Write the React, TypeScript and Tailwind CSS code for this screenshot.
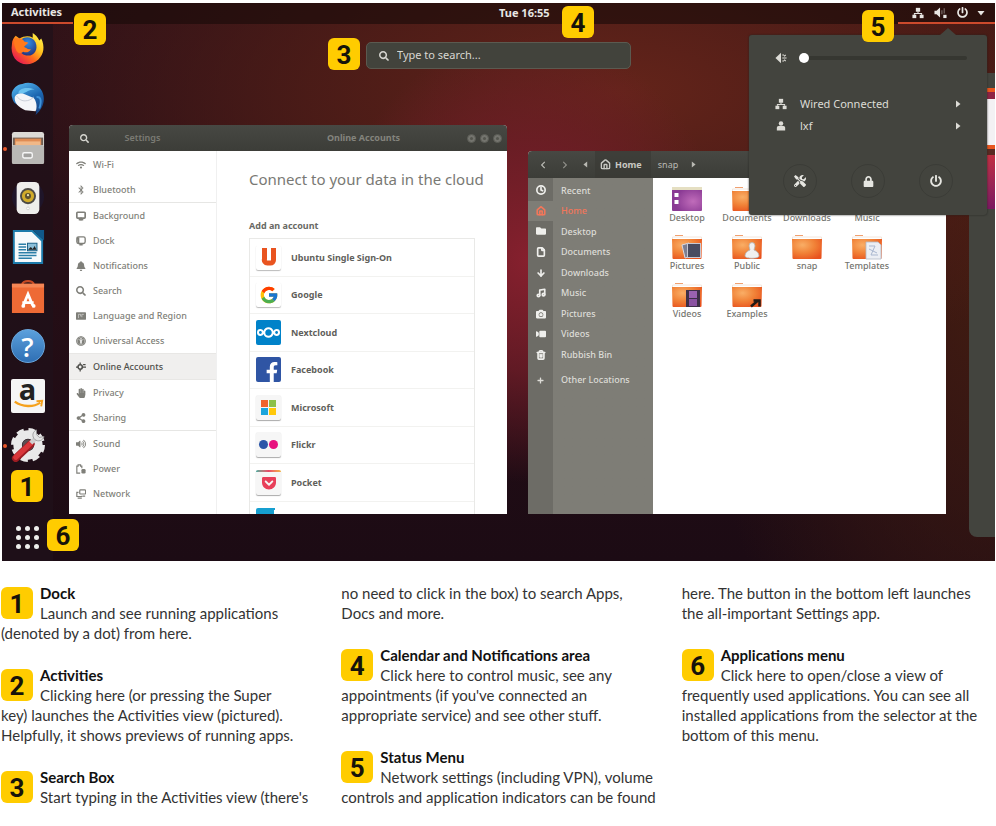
import type { ReactNode } from "react";
import { FcGoogle } from "react-icons/fc";
import { SiNextcloud } from "react-icons/si";
import {
  FaBell,
  FaBluetoothB,
  FaCamera,
  FaChevronLeft,
  FaChevronRight,
  FaFacebookF,
  FaFolder,
  FaHandPaper,
  FaLock,
  FaPlus,
  FaPowerOff,
  FaSearch,
  FaShareAlt,
  FaTools,
  FaUniversalAccess,
  FaVideo,
  FaVolumeUp,
  FaWifi,
} from "react-icons/fa";
import { FaGetPocket } from "react-icons/fa6";
import { ArrowDown, Clock, File, House, Monitor, Music, Trash2 } from "lucide-react";

const uiFont = "font-['Noto_Sans','Open_Sans',sans-serif]";

function Badge({ n, className = "" }: { n: number; className?: string }) {
  return (
    <span
      className={`flex h-8 w-8 items-center justify-center rounded-md bg-[#ffcc00] pt-0.5 font-['Roboto',sans-serif] text-[26px] leading-none font-bold text-[#16130a] ${className}`}
    >
      {n}
    </span>
  );
}

function NetworkIcon({ className = "" }: { className?: string }) {
  return (
    <svg viewBox="0 0 14 14" className={className} fill="currentColor" aria-hidden="true">
      <rect x="4.5" y="1" width="5" height="4.5" />
      <rect x="0.5" y="9" width="4.5" height="4" />
      <rect x="9" y="9" width="4.5" height="4" />
      <path d="M7 5v2.7M2.8 9V7.7h8.4V9" fill="none" stroke="currentColor" strokeWidth="1.2" />
    </svg>
  );
}

function QuietSpeaker({ className = "" }: { className?: string }) {
  return (
    <svg viewBox="0 0 14 14" className={className} fill="currentColor" aria-hidden="true">
      <path d="M0.5 7L7 1v12z" />
      <path d="M8.500 3.500h2M8.500 7h5M8.500 10.500h2M10.500 5l2-1.500M10.500 9l2 1.500" stroke="currentColor" strokeWidth="1.300" />
    </svg>
  );
}

function BlockedSpeaker({ className = "" }: { className?: string }) {
  return (
    <svg viewBox="0 0 14 14" className={className} fill="currentColor" aria-hidden="true">
      <path d="M0.500 5v4h2.200L6.500 12.500v-11L2.700 5z" />
      <path d="M8.500 4.500v4.500M11 2.500v5.500" stroke="currentColor" strokeWidth="1.300" opacity="0.4" />
      <rect x="10" y="9.500" width="3.500" height="3.500" />
    </svg>
  );
}

function PersonIcon({ className = "" }: { className?: string }) {
  return (
    <svg viewBox="0 0 12 12" className={className} fill="currentColor" aria-hidden="true">
      <circle cx="6" cy="3" r="2.700" />
      <path d="M1 11.500V8a2 2 0 0 1 2-2h6a2 2 0 0 1 2 2v3.500z" />
    </svg>
  );
}

function Triangle({ className = "" }: { className?: string }) {
  return (
    <svg viewBox="0 0 6 8" className={className} fill="currentColor" aria-hidden="true">
      <path d="M1 0.5L5.5 4L1 7.5z" />
    </svg>
  );
}

/* ---------- Dock ---------- */

const dockIcons: { name: string; running?: boolean; art: ReactNode }[] = [
  {
    name: "Firefox",
    art: (
      <svg viewBox="0 0 36 36">
        <defs>
          <linearGradient id="ff" x1="0.9" y1="0.1" x2="0.2" y2="0.9">
            <stop offset="0" stopColor="#fff04a" />
            <stop offset="0.35" stopColor="#ffc21e" />
            <stop offset="0.65" stopColor="#ff6a1c" />
            <stop offset="1" stopColor="#e8204e" />
          </linearGradient>
          <radialGradient id="ffb" cx="0.5" cy="0.3" r="0.7">
            <stop offset="0" stopColor="#2f8de4" />
            <stop offset="1" stopColor="#24357f" />
          </radialGradient>
        </defs>
        <path d="M1 13C1 9 3 6 5 4l4 3c5-3 10-3 14-1V1c3 2 5 4 7 8l2-2c4 8 3 17-3 22-7 7-19 7-25-1C1 24 0 18 1 13z" fill="url(#ff)" />
        <path d="M11 8c4-4 12-3 15 3 3 7-1 14-8 14-5 0-9-3-9-8 0-3 1-6 2-9z" fill="url(#ffb)" />
        <path d="M4 7c4-1 9 0 10 3l4 1c0 2-4 3-4 5 3 1 3 3 7 2-1 4-6 4-8 3-3 3-7 1-8-3-2-4-2-8-1-11z" fill="#ff7a1c" />
      </svg>
    ),
  },
  {
    name: "Thunderbird",
    art: (
      <svg viewBox="0 0 36 36">
        <defs>
          <linearGradient id="tb" x1="0.3" y1="0" x2="0.8" y2="1">
            <stop offset="0" stopColor="#4fb0ea" />
            <stop offset="0.5" stopColor="#1c66b0" />
            <stop offset="1" stopColor="#17407f" />
          </linearGradient>
        </defs>
        <path d="M1 16C-1 8 7 2 12 2c8-3 17 0 21 8 4 9 1 18-7 25 1-3 1-5 0-7-5-4-14-5-19-4-4-1-5-4-6-8z" fill="url(#tb)" />
        <path d="M4 16c2-4 5-4 8-4l12 5c3 3 4 10 2 14l-11-1C8 27 3 22 4 16z" fill="#f4f5f8" />
        <path d="M6 15c3 4 6 5 9 5 4 0 7-2 9-4" fill="none" stroke="#c7ccd6" />
        <path d="M8 12c-1-4 7-8 17-4-7 0-8 3-12 4z" fill="#6cc3f0" />
        <path d="M27 16c4-1 6 3 3 12" fill="none" stroke="#3e93da" strokeWidth="2" />
      </svg>
    ),
  },
  {
    name: "Files",
    running: true,
    art: (
      <svg viewBox="0 0 36 36">
        <rect x="1" y="1" width="34" height="34" rx="2.5" fill="#dcdad6" />
        <rect x="2" y="7" width="32" height="8" fill="#6d5f55" />
        <rect x="4" y="8" width="28" height="7" fill="#e08c54" />
        <rect x="5" y="11" width="26" height="4" fill="#f0b888" />
        <rect x="1" y="15" width="34" height="20" rx="2" fill="#b9b8b5" />
        <rect x="12.500" y="23" width="10" height="5.500" rx="1.500" fill="#a1a09e" stroke="#f7f7f7" strokeWidth="1.500" />
      </svg>
    ),
  },
  {
    name: "Rhythmbox",
    art: (
      <svg viewBox="0 0 36 36">
        <circle cx="18" cy="17" r="17" fill="#1c1a3a" opacity="0.5" />
        <rect x="6" y="1" width="24" height="34" rx="5" fill="#eeeeec" />
        <circle cx="18" cy="16" r="8.500" fill="#4c4a46" />
        <circle cx="18" cy="16" r="6.500" fill="#d0ab2a" />
        <circle cx="18" cy="16" r="3.200" fill="#5c5130" />
        <circle cx="18" cy="15" r="1.200" fill="#efe7b0" />
        <circle cx="18" cy="29" r="1.500" fill="#fff" stroke="#d0d0d0" />
      </svg>
    ),
  },
  {
    name: "LibreOffice Writer",
    art: (
      <svg viewBox="0 0 36 36">
        <path d="M2 0h21l11 10v26H2z" fill="#1c7bab" />
        <path d="M4 2h18l10 10v22H4z" fill="#f6fafc" />
        <path d="M23 0h12v11z" fill="#10598a" />
        <path d="M8 15h8M8 18h8M8 21h8M8 24h19M8 27h19M8 30h14" stroke="#2b7fa8" strokeWidth="1.600" />
        <rect x="17.500" y="14" width="10" height="8" fill="#8bbfd9" stroke="#165d83" />
        <path d="M18 21l3-3 2 2 2-3 2 4z" fill="#222" />
      </svg>
    ),
  },
  {
    name: "Ubuntu Software",
    art: (
      <svg viewBox="0 0 36 36">
        <path d="M12 5c0-5 12-5 12 0" fill="none" stroke="#c64a24" strokeWidth="2.500" />
        <path d="M1 4h34v31H1z" fill="#ee6a35" />
        <path d="M1 4h34v4H1z" fill="#f58655" />
        <path d="M13 27l5-12 5 12M12 24h12" fill="none" stroke="#fff" strokeWidth="3" />
        <circle cx="13" cy="27.500" r="2" fill="#fff" />
        <circle cx="24" cy="27.500" r="2" fill="#fff" />
      </svg>
    ),
  },
  {
    name: "Help",
    art: (
      <span className="flex h-full w-full items-center justify-center rounded-full border border-[#6aa6dc] bg-linear-to-b from-[#5ba0dc] to-[#2f6fb4] font-['Open_Sans',sans-serif] text-[27px] leading-none font-semibold text-white">
        ?
      </span>
    ),
  },
  {
    name: "Amazon",
    art: (
      <span className="relative flex h-full w-full justify-center rounded-xs bg-[#f5f5f5] font-['Open_Sans',sans-serif] text-[29px] leading-5 font-bold text-[#222]">
        a
        <svg viewBox="0 0 36 36" className="absolute inset-0" fill="none">
          <path d="M4 24c8 6 20 6 27 1" stroke="#f5a11c" strokeWidth="2.500" />
          <path d="M27 23.500l6-0.500-1 6" stroke="#f5a11c" strokeWidth="2" />
        </svg>
      </span>
    ),
  },
  {
    name: "Settings",
    running: true,
    art: (
      <svg viewBox="0 0 36 36">
        <circle cx="18" cy="18" r="11" fill="none" stroke="#e9e9e9" strokeWidth="9" />
        <circle cx="18" cy="18" r="16" fill="none" stroke="#e9e9e9" strokeWidth="4" strokeDasharray="7.570 5" />
        <circle cx="18" cy="18" r="6" fill="#5a5053" />
        <path d="M5 32L21 17" stroke="#9c1c22" strokeWidth="8" strokeLinecap="round" />
        <path d="M5 31L21 16" stroke="#d8363a" strokeWidth="5.500" strokeLinecap="round" />
        <path d="M21 16l6-6" stroke="#cfcfcf" strokeWidth="4.500" />
        <path d="M27 2a6 6 0 1 0 8 7l-5 1-3-3z" fill="#e4e4e4" stroke="#8d8d8d" strokeWidth="0.800" />
      </svg>
    ),
  },
];

function Dock() {
  return (
    <nav aria-label="Dock" className="flex w-[51px] shrink-0 flex-col items-center bg-[#1f1119]/70 pt-2">
      <div className="flex h-[430px] flex-col justify-between">
        {dockIcons.map((d) => (
          <button key={d.name} aria-label={d.name} className="relative block h-[34px] w-[34px]">
            {d.running && <span className="absolute top-4 -left-2 h-1 w-1 rounded-full bg-[#e8562a]" />}
            {d.art}
          </button>
        ))}
      </div>
      <button aria-label="Show applications" className="mt-16 grid grid-cols-3 gap-1">
        {Array.from({ length: 9 }, (_, i) => (
          <span key={i} className="h-[5px] w-[5px] rounded-full bg-[#eeeeec]" />
        ))}
      </button>
    </nav>
  );
}

/* ---------- Settings window ---------- */

const i10 = "h-[10px] w-[10px]";

function DockPanelIcon() {
  return (
    <svg viewBox="0 0 12 12" className={i10} aria-hidden="true">
      <rect x="1" y="1" width="10" height="8" rx="2" fill="none" stroke="currentColor" strokeWidth="1.600" />
      <path d="M1 1.500h3V9H2zM4 9h4v2.500H4z" fill="currentColor" />
    </svg>
  );
}

function FlagIcon() {
  return (
    <svg viewBox="0 0 12 12" className={i10} aria-hidden="true">
      <rect y="1.500" width="12" height="9" rx="1" fill="currentColor" />
      <path d="M3 8.500V4h2.500v2.500M7 7.500V4h2.500" fill="none" stroke="#fff" strokeWidth="0.800" opacity="0.7" />
    </svg>
  );
}

function CloudPlugIcon() {
  return (
    <svg viewBox="0 0 12 12" className={i10} aria-hidden="true">
      <circle cx="5" cy="6" r="2.600" fill="none" stroke="currentColor" strokeWidth="1.800" />
      <path d="M5 0.500v2.500M5 9v2.500M0 6h2.500M7.500 6H12M8.500 3h3" stroke="currentColor" strokeWidth="1.500" />
    </svg>
  );
}

function PowerPanelIcon() {
  return (
    <svg viewBox="0 0 12 12" className={i10} aria-hidden="true">
      <path d="M5 11H1V2.500h1.500V1h3v1.500H7V5" fill="none" stroke="currentColor" strokeWidth="1.400" />
      <rect x="6.500" y="6" width="5" height="5.500" rx="1.500" fill="currentColor" />
    </svg>
  );
}

function NetworkPanelIcon() {
  return (
    <svg viewBox="0 0 12 12" className={i10} aria-hidden="true">
      <rect x="4.500" y="1" width="7" height="5" rx="1" fill="none" stroke="currentColor" strokeWidth="1.400" />
      <path d="M3 4H1v5h6V8M2 11h5M8 8.500h3" fill="none" stroke="currentColor" strokeWidth="1.400" />
    </svg>
  );
}

const panels: { label: string; icon: ReactNode; ends?: boolean; active?: boolean }[] = [
  { label: "Wi-Fi", icon: <FaWifi className={i10} /> },
  { label: "Bluetooth", icon: <FaBluetoothB className={i10} />, ends: true },
  { label: "Background", icon: <Monitor className={i10} strokeWidth={4} /> },
  { label: "Dock", icon: <DockPanelIcon /> },
  { label: "Notifications", icon: <FaBell className={i10} /> },
  { label: "Search", icon: <FaSearch className={i10} /> },
  { label: "Language and Region", icon: <FlagIcon /> },
  { label: "Universal Access", icon: <FaUniversalAccess className={i10} /> },
  { label: "Online Accounts", icon: <CloudPlugIcon />, active: true },
  { label: "Privacy", icon: <FaHandPaper className={i10} /> },
  { label: "Sharing", icon: <FaShareAlt className={i10} />, ends: true },
  { label: "Sound", icon: <FaVolumeUp className={i10} /> },
  { label: "Power", icon: <PowerPanelIcon /> },
  { label: "Network", icon: <NetworkPanelIcon /> },
];

const tile = "flex h-[25px] w-[25px] items-center justify-center overflow-hidden rounded-xs";
const paleTile = `${tile} bg-[#f6f6f6] shadow-[0_1px_1px_#aaa]`;

const accounts: { name: string; icon: ReactNode }[] = [
  {
    name: "Ubuntu Single Sign-On",
    icon: (
      <span className={`${tile} bg-white shadow-[0_1px_1px_#bbb]`}>
        <svg viewBox="0 0 16 18" className="h-[18px] w-4" aria-hidden="true">
          <path d="M3.500 0v11a3 3 0 0 0 3 4h3a3 3 0 0 0 3-3V0" fill="none" stroke="#e95420" strokeWidth="5" />
        </svg>
      </span>
    ),
  },
  {
    name: "Google",
    icon: (
      <span className={`${tile} bg-white shadow-[0_1px_1px_#bbb]`}>
        <FcGoogle className="h-5 w-5" />
      </span>
    ),
  },
  {
    name: "Nextcloud",
    icon: (
      <span className={`${tile} bg-[#0082c9] text-white`}>
        <SiNextcloud className="h-[23px] w-[23px]" />
      </span>
    ),
  },
  {
    name: "Facebook",
    icon: (
      <span className={`${tile} bg-[#2f55a4] pt-1 pl-1.5 text-white`}>
        <FaFacebookF className="h-5 w-4" />
      </span>
    ),
  },
  {
    name: "Microsoft",
    icon: (
      <span className={paleTile}>
        <span className="grid grid-cols-2 gap-px">
          <span className="h-[7px] w-[7px] bg-[#f0642c]" />
          <span className="h-[7px] w-[7px] bg-[#8bc04a]" />
          <span className="h-[7px] w-[7px] bg-[#1ba5dc]" />
          <span className="h-[7px] w-[7px] bg-[#ffc80a]" />
        </span>
      </span>
    ),
  },
  {
    name: "Flickr",
    icon: (
      <span className={`${paleTile} gap-px`}>
        <span className="h-[9px] w-[9px] rounded-full bg-[#2c57a8]" />
        <span className="h-[9px] w-[9px] rounded-full bg-[#e8107e]" />
      </span>
    ),
  },
  {
    name: "Pocket",
    icon: (
      <span className={`${paleTile} flex-col`}>
        <span className="h-0.5 w-full bg-linear-to-r from-[#38a89d] via-[#e8476a] to-[#f2b33d]" />
        <span className="flex flex-1 items-center text-[#e8405a]">
          <FaGetPocket className="h-4 w-4" />
        </span>
      </span>
    ),
  },
];

function SettingsWindow() {
  return (
    <section
      aria-label="Settings window"
      className="absolute top-[122px] left-[67px] flex h-[389px] w-[438px] flex-col overflow-hidden rounded-t-[4px] bg-white"
    >
      <header className="flex h-[26px] shrink-0 items-center bg-linear-to-b from-[#474843] to-[#3c3d38] text-[9px] font-bold text-[#84847d]">
        <div className="flex w-[147px] items-center pl-[11px]">
          <FaSearch className="h-[9px] w-[9px] text-[#d5d5cf]" />
          <h2 className="flex-1 pr-5 text-center font-semibold text-[#7b7b74]">Settings</h2>
        </div>
        <h3 className="flex-1 pl-11 text-center">Online Accounts</h3>
        <div className="flex gap-1 pr-[5px]">
          {["Minimise", "Maximise", "Close"].map((b) => (
            <button key={b} aria-label={b} className="h-[9px] w-[9px] rounded-full border border-[#5b5c56] bg-[#74746e] p-0.5">
              <span className="block h-full w-full rounded-full bg-[#55564f]" />
            </button>
          ))}
        </div>
      </header>
      <div className="flex min-h-0 flex-1">
        <ul className="w-[148px] shrink-0 border-r border-[#f0f0f0] pt-px text-[9px] text-[#7f7f79]">
          {panels.map((p) => (
            <li
              key={p.label}
              className={
                p.active
                  ? "border-y border-[#e8e7e5] bg-[#f0efee] text-[#4e4e4a]"
                  : p.ends
                    ? "border-b border-[#e6e6e4]"
                    : ""
              }
            >
              <button className="flex h-[25px] w-full items-center gap-[7px] pl-[7px] text-left">
                {p.icon}
                <span className="font-medium whitespace-nowrap">{p.label}</span>
              </button>
            </li>
          ))}
        </ul>
        <div className="flex-1 overflow-hidden px-8 pt-4">
          <h1 className="text-[15px] leading-6 whitespace-nowrap text-[#797974]">Connect to your data in the cloud</h1>
          <h2 className="mt-[27px] text-[9px] leading-4 font-bold text-[#696964]">Add an account</h2>
          <ul className="mt-1 grid h-[302px] grid-rows-8 border border-[#e9e9e7] text-[9px] font-bold text-[#5f5f5b]">
            {accounts.map((a) => (
              <li key={a.name} className="border-b border-[#f2f2f0]">
                <button className="flex h-full w-full items-center gap-[10px] pl-1.5 text-left">
                  {a.icon}
                  {a.name}
                </button>
              </li>
            ))}
            <li className="pt-1.5 pl-1.5">
              <button aria-label="Foursquare" className={`${tile} bg-linear-105 from-[#169fd0] from-60% to-white to-60%`} />
            </li>
          </ul>
        </div>
      </div>
    </section>
  );
}

/* ---------- Files window ---------- */

const places: { label: string; icon: ReactNode; active?: boolean }[] = [
  { label: "Recent", icon: <Clock className={i10} strokeWidth={4} /> },
  { label: "Home", icon: <House className={i10} strokeWidth={4} />, active: true },
  { label: "Desktop", icon: <FaFolder className={i10} /> },
  { label: "Documents", icon: <File className={i10} strokeWidth={4} /> },
  { label: "Downloads", icon: <ArrowDown className={i10} strokeWidth={4} /> },
  { label: "Music", icon: <Music className={i10} strokeWidth={4} /> },
  { label: "Pictures", icon: <FaCamera className={i10} /> },
  { label: "Videos", icon: <FaVideo className={`${i10} -scale-x-100`} /> },
  { label: "Rubbish Bin", icon: <Trash2 className={i10} strokeWidth={4} /> },
];

const emblems: Record<string, ReactNode> = {
  Pictures: (
    <g>
      <path d="M10 11l7-2 3 13-7 2z" fill="#7d7f92" stroke="#d9d9e2" />
      <rect x="15.500" y="9.500" width="13" height="14" fill="#494b60" stroke="#c7c8d3" />
    </g>
  ),
  Public: (
    <path d="M17 12a3 3.500 0 1 1 6 0l-1 4c3 1 5 3 5 6 0 3-14 3-14 0 0-3 2-5 5-6z" fill="#f0f0f0" stroke="#b4b4b4" strokeWidth="0.800" />
  ),
  Templates: (
    <g>
      <path d="M14 8h12l3 3v14H14z" fill="#eceff4" stroke="#b3bac6" strokeWidth="0.800" />
      <path d="M17 12h6l-4 9h7M17 15l8 4" fill="none" stroke="#a9b7cf" />
    </g>
  ),
  Videos: (
    <g>
      <rect x="14" y="8" width="14" height="17" fill="#3d3048" />
      <rect x="17" y="9" width="8" height="7" fill="#9a62b0" />
      <rect x="17" y="17" width="8" height="7" fill="#8a52a2" />
    </g>
  ),
  Examples: (
    <path d="M19 24.500l7-6M21.500 18.500h6v6" fill="none" stroke="#221a16" strokeWidth="2.500" />
  ),
};

function FolderArt({ name }: { name: string }) {
  if (name === "Desktop") {
    return (
      <svg viewBox="0 0 30 26" className="h-[26px] w-[30px]" aria-hidden="true">
        <defs>
          <radialGradient id="desk" cx="0.7" cy="0.6" r="0.6">
            <stop offset="0" stopColor="#c06cba" />
            <stop offset="1" stopColor="#8a3a94" />
          </radialGradient>
        </defs>
        <rect y="1" width="30" height="24" rx="1" fill="url(#desk)" />
        <rect y="1" width="30" height="3" fill="#e5dfc2" />
        <rect x="2.500" y="7" width="4" height="4" fill="#fff" />
        <rect x="2.500" y="14" width="4" height="4" fill="#fff" />
      </svg>
    );
  }
  return (
    <svg viewBox="0 0 30 26" className="h-[26px] w-[30px]" aria-hidden="true">
      <defs>
        <radialGradient id={`folder-${name}`} cx="0.35" cy="0.3" r="0.8">
          <stop offset="0" stopColor="#f9ae66" />
          <stop offset="0.5" stopColor="#f18338" />
          <stop offset="1" stopColor="#e8521e" />
        </radialGradient>
      </defs>
      <path d="M3 1.500h8" stroke="#f0a070" />
      <path d="M0.500 5V3h29v2" fill="none" stroke="#f3e6dc" />
      <path d="M0 5h30l-0.500 19a1 1 0 0 1-1 1H1.500a1 1 0 0 1-1-1z" fill={`url(#folder-${name})`} />
      {emblems[name]}
    </svg>
  );
}

const folders = ["Desktop", "Documents", "Downloads", "Music", "Pictures", "Public", "snap", "Templates", "Videos", "Examples"];

function FilesWindow() {
  return (
    <section
      aria-label="Files window"
      className="absolute top-[148px] left-[526px] flex h-[363px] w-[418px] flex-col overflow-hidden rounded-t-[4px] bg-white"
    >
      <header className="flex h-[27px] shrink-0 items-center bg-linear-to-b from-[#474843] to-[#3c3d38] text-[9px] text-[#b9b9b3]">
        <button aria-label="Back" className="flex w-[26px] justify-center pl-1">
          <FaChevronLeft className="h-2 w-2" />
        </button>
        <button aria-label="Forward" className="flex w-[22px] justify-center">
          <FaChevronRight className="h-2 w-2 text-[#8e8e88]" />
        </button>
        <span className="flex w-[19px] justify-center">
          <Triangle className="h-[7px] w-[5px] rotate-180" />
        </span>
        <button className="flex h-full w-[56px] items-center gap-1 bg-[#383934]/60 pl-[5px] font-bold text-[#c9c9c3]">
          <House className="h-[11px] w-[11px]" strokeWidth={3} />
          Home
        </button>
        <button className="w-[34px] text-center">snap</button>
        <Triangle className="ml-1.5 h-[7px] w-[5px]" />
      </header>
      <div className="flex min-h-0 flex-1">
        <div className="w-[125px] bg-linear-to-r from-[#6d6c66] from-20% to-[#7e7d76] to-20% pt-[2px] text-[9px] font-medium text-[#dddcd7]">
          <ul className="flex h-[185px] flex-col">
            {places.map((p) => (
              <li key={p.label} className={`flex-1 ${p.active ? "text-[#f2765a]" : ""}`}>
                <button className="flex h-full w-full items-center text-left">
                  <span className={`flex h-full w-[25px] items-center justify-center ${p.active ? "bg-[#7e7d76]" : "text-[#efefec]"}`}>
                    {p.icon}
                  </span>
                  <span className="pl-2">{p.label}</span>
                </button>
              </li>
            ))}
          </ul>
          <button className="mt-[5px] flex h-5 w-full items-center text-left">
            <span className="flex w-[25px] justify-center">
              <FaPlus className="h-[7px] w-[7px]" />
            </span>
            <span className="pl-2">Other Locations</span>
          </button>
        </div>
        <ul className="grid flex-1 auto-rows-[48px] grid-cols-[repeat(4,60px)] content-start pt-2 pl-1 text-[9px] text-[#75756f]">
          {folders.map((f) => (
            <li key={f} className="flex flex-col items-center">
              <FolderArt name={f} />
              <span className="leading-3 font-medium">{f}</span>
            </li>
          ))}
        </ul>
      </div>
    </section>
  );
}

/* ---------- Status menu ---------- */

function StatusMenu() {
  return (
    <aside
      aria-label="Status menu"
      className="absolute top-8 right-2 h-[180px] w-[238px] rounded-[3px] bg-[#43443e] px-[26px] pt-[14px] text-[11px] text-[#dddcd6] shadow-[0_0_2px_#22231f]"
    >
      <svg viewBox="0 0 16 7" className="absolute -top-[7px] right-[31px] h-[7px] w-4" aria-hidden="true">
        <path d="M0 7L8 0l8 7z" fill="#43443e" />
      </svg>
      <div className="flex h-[18px] items-center gap-3">
        <QuietSpeaker className="h-3 w-3" />
        <input
          type="range"
          min="0"
          max="100"
          defaultValue="0"
          aria-label="Volume"
          className="-mr-1.5 h-1 min-w-0 flex-1 appearance-none rounded-full bg-[#363731] [&::-webkit-slider-thumb]:h-[10px] [&::-webkit-slider-thumb]:w-[10px] [&::-webkit-slider-thumb]:appearance-none [&::-webkit-slider-thumb]:rounded-full [&::-webkit-slider-thumb]:bg-white"
        />
      </div>
      <div className="mt-[26px] flex flex-col">
        <button className="flex h-[22px] items-center text-left">
          <NetworkIcon className="h-3 w-3" />
          <span className="ml-[13px] flex-1">Wired Connected</span>
          <Triangle className="h-2 w-1.5" />
        </button>
        <button className="flex h-[22px] items-center text-left">
          <PersonIcon className="mx-px h-[10px] w-[10px]" />
          <span className="ml-[13px] flex-1">lxf</span>
          <Triangle className="h-2 w-1.5" />
        </button>
      </div>
      <div className="mt-[27px] flex justify-between px-2 text-[#e6e6e1]">
        <button aria-label="Settings" className="flex h-[34px] w-[34px] items-center justify-center rounded-full border border-[#3b3c37]">
          <FaTools className="h-3 w-3" />
        </button>
        <button aria-label="Lock" className="flex h-[34px] w-[34px] items-center justify-center rounded-full border border-[#3b3c37]">
          <FaLock className="h-[11px] w-[11px]" />
        </button>
        <button aria-label="Power off" className="flex h-[34px] w-[34px] items-center justify-center rounded-full border border-[#3b3c37]">
          <FaPowerOff className="h-3 w-3" />
        </button>
      </div>
    </aside>
  );
}

function Workspaces() {
  return (
    <div aria-label="Workspaces" className="absolute top-[70px] right-0 flex h-[464px] w-[26px] flex-col items-end rounded-l-lg bg-[#43443e] pt-[15px]">
      <div className="h-[11px] w-2 border-t-4 border-[#e8561f] bg-[#8e2444]" />
      <div className="h-[46px] w-2 bg-[#f3f1f3]" />
      <div className="h-[10px] w-2 border-t-4 border-[#e8561f] bg-[#5a2a22]" />
      <div className="h-[54px] w-2 bg-linear-to-b from-[#c12f40] to-[#7a1860]" />
    </div>
  );
}

function Desktop() {
  return (
    <section
      aria-label="Ubuntu desktop"
      className={`relative mt-[3px] mr-px ml-0.5 flex h-[558px] flex-col overflow-hidden bg-[#231016] bg-[radial-gradient(ellipse_20%_40%_at_53%_46%,#86202e_0%,#701d28cc_50%,transparent_100%),radial-gradient(ellipse_62%_50%_at_62%_16%,#64241a_0%,#521e17cc_50%,transparent_100%),radial-gradient(ellipse_30%_100%_at_100%_45%,#431c11_0%,transparent_100%),linear-gradient(to_bottom,#2e1118,#1c0b14)] ${uiFont}`}
    >
      <header className="grid h-[21px] shrink-0 grid-cols-[1fr_400px_97px] bg-[#170a08]/60 text-[11px] font-bold text-[#e8e6e3]">
        <div className="flex">
          <button className="w-[71px] border-b-2 border-[#cc4a2c] pl-[9px] text-left">Activities</button>
        </div>
        <time className="pt-0.5 pl-px leading-4">Tue 16:55</time>
        <button aria-label="System status" className="flex items-center gap-[10px] border-b-2 border-[#cc4a2c] pl-[14px]">
          <NetworkIcon className="h-3 w-3" />
          <BlockedSpeaker className="h-[13px] w-[13px]" />
          <FaPowerOff className="h-[11px] w-[11px]" />
          <Triangle className="h-2 w-1.5 rotate-90" />
        </button>
      </header>
      <div className="flex flex-1">
        <Dock />
        <div className="flex-1 pt-[18px] pr-[51px]">
          <form className="mx-auto flex h-[27px] w-[265px] items-center gap-2 rounded-[5px] border border-[#5b5a50] bg-[#42433c] pl-3">
            <FaSearch className="h-[10px] w-[10px] text-[#d5d4cf]" />
            <input
              type="search"
              aria-label="Search"
              placeholder="Type to search..."
              className="w-[220px] bg-transparent text-[11px] outline-none placeholder:text-[#d8d7d2]"
            />
          </form>
        </div>
      </div>
      <Workspaces />
      <SettingsWindow />
      <FilesWindow />
      <StatusMenu />
      <Badge n={1} className="absolute top-[467px] left-[9px]" />
      <Badge n={2} className="absolute top-[10px] left-[72px]" />
      <Badge n={3} className="absolute top-[35px] right-[635px]" />
      <Badge n={4} className="absolute top-[3px] right-[401px]" />
      <Badge n={5} className="absolute top-[7px] right-[101px]" />
      <Badge n={6} className="absolute top-[516px] left-[45px]" />
    </section>
  );
}

/* ---------- Annotations ---------- */

function Lines({ lines }: { lines: string[] }) {
  return (
    <p className="whitespace-nowrap">
      {lines.map((line) => (
        <span key={line}>
          {line}
          <br />
        </span>
      ))}
    </p>
  );
}

function Note({ n, title, lines }: { n: number; title: string; lines: string[] }) {
  return (
    <article>
      <Badge n={n} className="float-left mt-1 mr-[7px]" />
      <h2 className="font-bold text-[#111]">{title}</h2>
      <Lines lines={lines} />
    </article>
  );
}

export default function App() {
  return (
    <main className="w-full overflow-hidden bg-white">
      <Desktop />
      <div className="mt-[22px] ml-px grid grid-cols-3 gap-[26px] pb-5 font-['Lato',sans-serif] text-[15px] leading-5 text-[#333]">
        <div className="flex flex-col gap-[22px]">
          <Note n={1} title="Dock" lines={["Launch and see running applications", "(denoted by a dot) from here."]} />
          <Note
            n={2}
            title="Activities"
            lines={["Clicking here (or pressing the Super", "key) launches the Activities view (pictured).", "Helpfully, it shows previews of running apps."]}
          />
          <Note n={3} title="Search Box" lines={["Start typing in the Activities view (there's"]} />
        </div>
        <div className="flex flex-col gap-[22px]">
          <Lines lines={["no need to click in the box) to search Apps,", "Docs and more."]} />
          <Note
            n={4}
            title="Calendar and Notifications area"
            lines={["Click here to control music, see any", "appointments (if you've connected an", "appropriate service) and see other stuff."]}
          />
          <Note n={5} title="Status Menu" lines={["Network settings (including VPN), volume", "controls and application indicators can be found"]} />
        </div>
        <div className="flex flex-col gap-[22px]">
          <Lines lines={["here. The button in the bottom left launches", "the all-important Settings app."]} />
          <Note
            n={6}
            title="Applications menu"
            lines={[
              "Click here to open/close a view of",
              "frequently used applications. You can see all",
              "installed applications from the selector at the",
              "bottom of this menu.",
            ]}
          />
        </div>
      </div>
    </main>
  );
}
